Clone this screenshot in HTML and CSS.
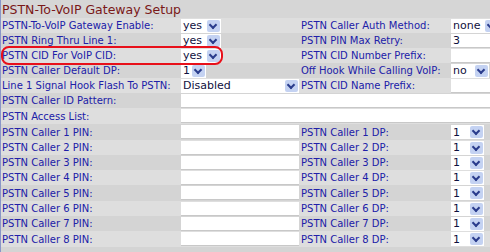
FILE: index.html
```html
<!DOCTYPE html>
<html lang="en">
<head>
    <meta charset="UTF-8">
    <title>PSTN-To-VoIP Gateway Setup</title>
    <link rel="stylesheet" href="styles.css">
</head>
<body>

<div class="panel">
    <table class="setup">
        <colgroup>
            <col class="c-label"><col class="c-value"><col class="c-label2"><col class="c-value2">
        </colgroup>
        <tr class="head"><td colspan="4">PSTN-To-VoIP Gateway Setup</td></tr>
        <tr class="sel">
            <td class="lbl">PSTN-To-VoIP Gateway Enable:</td>
            <td><span class="dd w-yes">yes<i class="arr"></i></span></td>
            <td class="lbl">PSTN Caller Auth Method:</td>
            <td><span class="dd w-none">none<i class="arr"></i></span></td>
        </tr>
        <tr class="sel">
            <td class="lbl">PSTN Ring Thru Line 1:</td>
            <td><span class="dd w-yes">yes<i class="arr"></i></span></td>
            <td class="lbl">PSTN PIN Max Retry:</td>
            <td><span class="txt">3</span></td>
        </tr>
        <tr class="sel">
            <td class="lbl">PSTN CID For VoIP CID:</td>
            <td><span class="dd w-yes">yes<i class="arr"></i></span></td>
            <td class="lbl">PSTN CID Number Prefix:</td>
            <td><span class="txt"></span></td>
        </tr>
        <tr class="sel">
            <td class="lbl">PSTN Caller Default DP:</td>
            <td><span class="dd w-one">1<i class="arr"></i></span></td>
            <td class="lbl">Off Hook While Calling VoIP:</td>
            <td><span class="dd w-no">no<i class="arr"></i></span></td>
        </tr>
        <tr class="sel">
            <td class="lbl">Line 1 Signal Hook Flash To PSTN:</td>
            <td><span class="dd w-dis">Disabled<i class="arr"></i></span></td>
            <td class="lbl">PSTN CID Name Prefix:</td>
            <td><span class="txt"></span></td>
        </tr>
        <tr class="inp">
            <td class="lbl">PSTN Caller ID Pattern:</td>
            <td colspan="3"><span class="txt wide"></span></td>
        </tr>
        <tr class="inp tall">
            <td class="lbl">PSTN Access List:</td>
            <td colspan="3"><span class="txt wide"></span></td>
        </tr>
        <tr class="inp tall"><td class="lbl">PSTN Caller 1 PIN:</td><td><span class="txt pin"></span></td><td class="lbl">PSTN Caller 1 DP:</td><td><span class="dd w-dp">1<i class="arr"></i></span></td></tr>
        <tr class="inp"><td class="lbl">PSTN Caller 2 PIN:</td><td><span class="txt pin"></span></td><td class="lbl">PSTN Caller 2 DP:</td><td><span class="dd w-dp">1<i class="arr"></i></span></td></tr>
        <tr class="inp"><td class="lbl">PSTN Caller 3 PIN:</td><td><span class="txt pin"></span></td><td class="lbl">PSTN Caller 3 DP:</td><td><span class="dd w-dp">1<i class="arr"></i></span></td></tr>
        <tr class="inp"><td class="lbl">PSTN Caller 4 PIN:</td><td><span class="txt pin"></span></td><td class="lbl">PSTN Caller 4 DP:</td><td><span class="dd w-dp">1<i class="arr"></i></span></td></tr>
        <tr class="inp tall"><td class="lbl">PSTN Caller 5 PIN:</td><td><span class="txt pin"></span></td><td class="lbl">PSTN Caller 5 DP:</td><td><span class="dd w-dp">1<i class="arr"></i></span></td></tr>
        <tr class="inp"><td class="lbl">PSTN Caller 6 PIN:</td><td><span class="txt pin"></span></td><td class="lbl">PSTN Caller 6 DP:</td><td><span class="dd w-dp">1<i class="arr"></i></span></td></tr>
        <tr class="inp"><td class="lbl">PSTN Caller 7 PIN:</td><td><span class="txt pin"></span></td><td class="lbl">PSTN Caller 7 DP:</td><td><span class="dd w-dp">1<i class="arr"></i></span></td></tr>
        <tr class="inp tall"><td class="lbl">PSTN Caller 8 PIN:</td><td><span class="txt pin"></span></td><td class="lbl">PSTN Caller 8 DP:</td><td><span class="dd w-dp">1<i class="arr"></i></span></td></tr>
        <tr class="tail"><td colspan="4"></td></tr>
    </table>

    <!-- highlight around the CID row -->
    <div class="ring"></div>
</div>

</body>
</html>
```

FILE: styles.css
```css
body { margin: 0; background: #d8d8d8; font-family: "DejaVu Sans", Verdana, sans-serif; font-size: 10px; overflow: hidden; }
.panel { position: relative; width: 490px; height: 252px; background: #d8d8d8; border-left: 1px solid #8a96c8; box-sizing: border-box; }

.setup { border-collapse: collapse; table-layout: fixed; width: 489px; }
.setup td { padding: 0; white-space: nowrap; overflow: hidden; vertical-align: middle; }
.c-label { width: 180px; }
.c-value { width: 119px; }
.c-label2 { width: 151px; }
.c-value2 { width: 39px; }

.head td { height: 18px; color: #7a1818; font-size: 12.5px; padding-left: 1px; background: #d6d6d6; }
.sel td { height: 15px; }
.inp td { height: 15px; }
.inp.tall td { height: 16px; }
.tail td { height: 8px; }

.setup tr:nth-child(even) { background: #dedede; }
.setup tr:nth-child(odd) { background: #d4d4d4; }
.setup tr.head { background: #d6d6d6; }

.lbl { color: #2020a8; padding-left: 1px !important; }

.dd { display: flex; align-items: center; justify-content: space-between; height: 14px; box-sizing: border-box; background: #fff; color: #101040; padding: 0 1px 0 2px; font-size: 11px; }
.arr { flex: none; width: 13px; height: 12px; background: #c4d2f2; border-radius: 2px; position: relative; }
.arr::after { content: ""; position: absolute; left: 3px; top: 2px; width: 4px; height: 4px; border-right: 2px solid #2a3c8c; border-bottom: 2px solid #2a3c8c; transform: rotate(45deg); }

.w-yes { width: 40px; }
.w-one { width: 25px; }
.w-dis { width: 118px; }
.w-none { width: 48px; }
.w-no { width: 38px; }
.w-dp { width: 33px; }

.txt { display: block; height: 14px; background: #fff; color: #101040; padding-left: 2px; font-size: 11px; line-height: 14px; border-bottom: 1px solid #c8c8c8; box-sizing: border-box; }
.txt.pin { width: 118px; }

.ring { position: absolute; left: 0; top: 46px; width: 222px; height: 19px; box-sizing: border-box; border: 2px solid #e8101a; border-radius: 8px; }
```
